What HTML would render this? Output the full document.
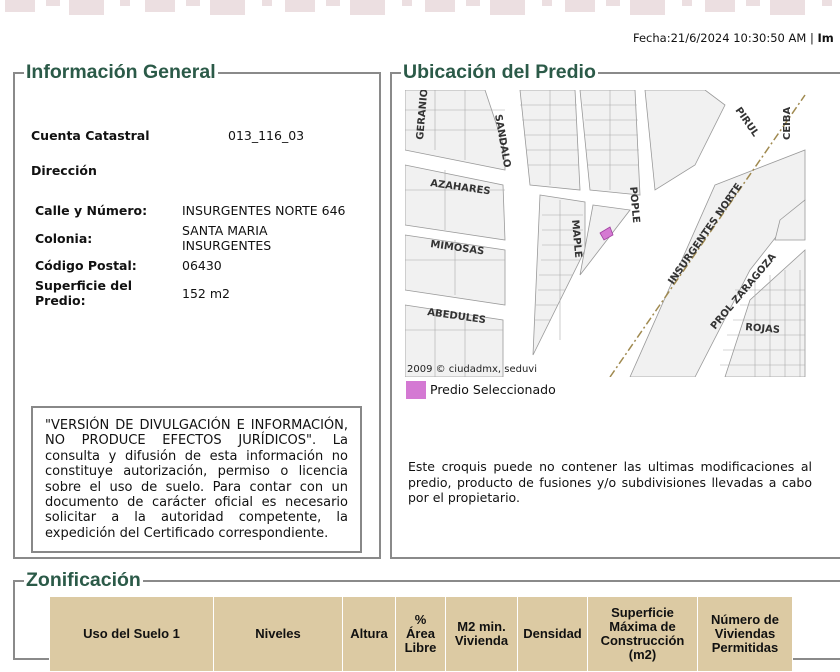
<!DOCTYPE html>
<html><head><meta charset="utf-8">
<style>
*{margin:0;padding:0;box-sizing:border-box}
body{width:840px;height:630px;overflow:hidden;background:#fff;font-family:"DejaVu Sans","Liberation Sans",sans-serif;font-size:12.5px;color:#111;position:relative}
.abs{position:absolute}
.fs{position:absolute;border:2px solid #8a8a8a}
.lg{position:absolute;background:#fff;color:#2b5a48;font-family:"Liberation Sans",sans-serif;font-weight:bold;font-size:19.5px;padding:0 2px;line-height:20px}
b{font-weight:bold}
.disc{position:absolute;left:31px;top:406px;width:331px;height:147px;border:2px solid #888;padding:10px 12px;font-size:13px;line-height:15.4px;text-align:justify}
th{background:#dccaa3;font-family:"Liberation Sans",sans-serif;font-size:13px;font-weight:bold;border:1px solid #fff;vertical-align:middle;text-align:center;line-height:14px}
</style></head><body>
<svg class="abs" style="left:0;top:0" width="840" height="16">
<g fill="#ecdfe1">
<rect x="5" y="0" width="30" height="12"/><rect x="46" y="0" width="14" height="6"/><rect x="69" y="0" width="35" height="15"/><rect x="120" y="0" width="10" height="6"/>
<rect x="145" y="0" width="30" height="12"/><rect x="186" y="0" width="14" height="6"/><rect x="210" y="0" width="35" height="15"/><rect x="262" y="0" width="10" height="6"/>
<rect x="285" y="0" width="30" height="12"/><rect x="326" y="0" width="14" height="6"/><rect x="350" y="0" width="35" height="15"/><rect x="402" y="0" width="10" height="6"/>
<rect x="425" y="0" width="30" height="12"/><rect x="466" y="0" width="14" height="6"/><rect x="490" y="0" width="35" height="15"/><rect x="542" y="0" width="10" height="6"/>
<rect x="565" y="0" width="30" height="12"/><rect x="606" y="0" width="14" height="6"/><rect x="630" y="0" width="35" height="15"/><rect x="682" y="0" width="10" height="6"/>
<rect x="705" y="0" width="30" height="12"/><rect x="746" y="0" width="14" height="6"/><rect x="770" y="0" width="35" height="15"/><rect x="822" y="0" width="10" height="6"/>
</g></svg>
<div class="abs" style="left:633px;top:31px;font-size:11.5px;white-space:nowrap">Fecha:21/6/2024 10:30:50 AM | <b>Im</b></div>

<div class="fs" style="left:13px;top:72px;width:368px;height:487px"></div>
<div class="lg" style="left:24px;top:62px">Información General</div>
<div class="abs" style="left:31px;top:128px"><b>Cuenta Catastral</b></div>
<div class="abs" style="left:228px;top:128px">013_116_03</div>
<div class="abs" style="left:31px;top:163px"><b>Dirección</b></div>
<div class="abs" style="left:35px;top:203px"><b>Calle y Número:</b></div>
<div class="abs" style="left:182px;top:203px">INSURGENTES NORTE 646</div>
<div class="abs" style="left:35px;top:231px"><b>Colonia:</b></div>
<div class="abs" style="left:182px;top:223px;line-height:15px">SANTA MARIA<br>INSURGENTES</div>
<div class="abs" style="left:35px;top:258px"><b>Código Postal:</b></div>
<div class="abs" style="left:182px;top:258px">06430</div>
<div class="abs" style="left:35px;top:278px;line-height:15px"><b>Superficie del<br>Predio:</b></div>
<div class="abs" style="left:182px;top:286px">152 m2</div>
<div class="disc">"VERSIÓN DE DIVULGACIÓN E INFORMACIÓN, NO PRODUCE EFECTOS JURÍDICOS". La consulta y difusión de esta información no constituye autorización, permiso o licencia sobre el uso de suelo. Para contar con un documento de carácter oficial es necesario solicitar a la autoridad competente, la expedición del Certificado correspondiente.</div>

<div class="fs" style="left:390px;top:72px;width:460px;height:487px"></div>
<div class="lg" style="left:401px;top:62px">Ubicación del Predio</div>
<svg class="abs" style="left:405px;top:90px" width="402" height="287" viewBox="0 0 402 287">
<rect width="402" height="287" fill="#fff"/>
<g fill="#f1f1f1" stroke="#999" stroke-width="0.8">
<polygon points="0,0 80,0 100,60 100,80 0,60"/>
<polygon points="0,75 98,95 100,150 0,135"/>
<polygon points="0,145 100,160 100,215 0,200"/>
<polygon points="0,215 98,230 98,287 0,287"/>
<polygon points="115,0 170,0 175,100 125,95"/>
<polygon points="175,0 230,0 235,105 185,100"/>
<polygon points="240,0 300,0 320,15 290,75 250,100"/>
<polygon points="135,105 180,112 180,160 128,265"/>
<polygon points="188,115 225,120 175,185"/>
<polygon points="310,95 400,60 400,110 345,180 290,287 225,287"/>
<polygon points="320,287 345,210 400,160 400,287"/>
<polygon points="375,130 400,110 400,150 370,150"/>
</g>
<g stroke="#aaa" stroke-width="0.6" fill="none">
<path d="M0,20H100M0,40H100M30,0V60M60,0V70M0,100H100M40,80V140M0,170H100M50,150V205M0,240H98M30,220V287M60,225V287"/>
<path d="M115,15H172M117,30H172M119,45H173M121,60H174M123,75H174M145,0V95M178,15H232M180,30H233M180,45H233M181,60H234M182,75H234M205,0V100"/>
<path d="M137,125H178M137,140H178M137,155H178M136,170H175M134,185H168M133,200H160M131,215H153M130,230H146M155,110V250"/>
<path d="M330,200H400M335,215H400M328,230H400M322,245H400M318,260H400M315,275H400M350,190V287M365,185V287M380,180V287M395,180V287"/>
</g>
<polygon points="195,143 205,137 208,145 199,150" fill="#d57ad2" stroke="#a040a0" stroke-width="0.8"/>
<line x1="205" y1="287" x2="400" y2="5" stroke="#a08a50" stroke-width="1.5" stroke-dasharray="8,3,2,3"/>
<g font-family="DejaVu Sans,sans-serif" font-size="10" font-weight="bold" fill="#333">
<text x="25" y="96" transform="rotate(8 25 96)">AZAHARES</text>
<text x="25" y="157" transform="rotate(8 25 157)">MIMOSAS</text>
<text x="22" y="225" transform="rotate(8 22 225)">ABEDULES</text>
<text x="268" y="195" transform="rotate(-55 268 195)">INSURGENTES NORTE</text>
<text x="310" y="240" transform="rotate(-50 310 240)">PROL ZARAGOZA</text>
<text x="340" y="240" transform="rotate(5 340 240)">ROJAS</text>
<text x="330" y="20" transform="rotate(55 330 20)">PIRUL</text>
<text x="385" y="50" transform="rotate(-90 385 50)">CEIBA</text>
<text x="90" y="25" transform="rotate(80 90 25)">SANDALO</text>
<text x="225" y="97" transform="rotate(85 225 97)">POPLE</text>
<text x="167" y="130" transform="rotate(85 167 130)">MAPLE</text>
<text x="18" y="50" transform="rotate(-85 18 50)">GERANIO</text>
</g>
<text x="2" y="282" font-family="DejaVu Sans,sans-serif" font-size="10" fill="#222">2009 © ciudadmx, seduvi</text>
</svg>
<div class="abs" style="left:406px;top:381px;width:20px;height:18px;background:#d479d3"></div>
<div class="abs" style="left:430px;top:382px">Predio Seleccionado</div>
<div class="abs" style="left:408px;top:459px;width:404px;line-height:15.5px;text-align:justify">Este croquis puede no contener las ultimas modificaciones al predio, producto de fusiones y/o subdivisiones llevadas a cabo por el propietario.</div>

<div class="fs" style="left:13px;top:580px;width:840px;height:80px"></div>
<div class="lg" style="left:24px;top:570px">Zonificación</div>
<table class="abs" style="left:49px;top:596px;border-collapse:collapse;width:744px;height:76px">
<tr>
<th style="width:164px">Uso del Suelo 1</th><th style="width:129px">Niveles</th><th style="width:53px">Altura</th><th style="width:50px">%<br>Área<br>Libre</th><th style="width:72px">M2 min.<br>Vivienda</th><th style="width:70px">Densidad</th><th style="width:110px">Superficie<br>Máxima de<br>Construcción<br>(m2)</th><th>Número de<br>Viviendas<br>Permitidas</th>
</tr></table>
</body></html>
